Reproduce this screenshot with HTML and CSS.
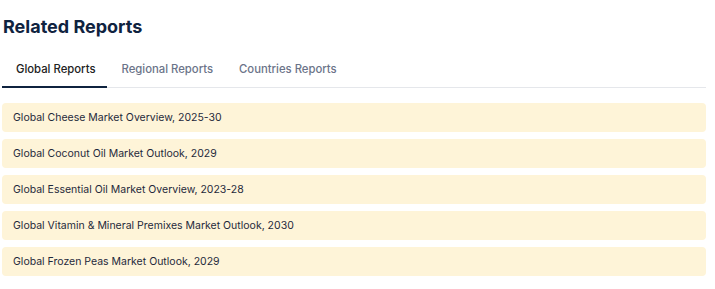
FILE: index.html
```html
<!DOCTYPE html>
<html>

<head lang="en">
  <meta charset="UTF-8">
  <title>Related Reports</title>
  <link rel="stylesheet" href="styles.css">
</head>

<body>
  <div class="related">
    <h2 class="related-title">Related Reports</h2>
    <ul class="tabs">
      <li class="tab active"><a href="#">Global Reports</a></li>
      <li class="tab"><a href="#">Regional Reports</a></li>
      <li class="tab"><a href="#">Countries Reports</a></li>
    </ul>
    <ul class="report-list">
      <li><a href="#">Global Cheese Market Overview, 2025-30</a></li>
      <li><a href="#">Global Coconut Oil Market Outlook, 2029</a></li>
      <li><a href="#">Global Essential Oil Market Overview, 2023-28</a></li>
      <li><a href="#">Global Vitamin &amp; Mineral Premixes Market Outlook, 2030</a></li>
      <li><a href="#">Global Frozen Peas Market Outlook, 2029</a></li>
    </ul>
  </div>
</body>

</html>
```

FILE: styles.css
```css
/* reset */
body,
h2,
ul,
li {
  margin: 0;
  padding: 0;
}

ul {
  list-style: none;
}

a {
  text-decoration: none;
  color: inherit;
}

body {
  font-family: Inter, "Liberation Sans", sans-serif;
  background: #fff;
  color: #1e293b;
}

.related {
  width: 704px;
  padding: 14px 9px 0 2px;
}

.related-title {
  font-size: 18px;
  font-weight: 700;
  line-height: 26px;
  color: #0f233f;
  padding-left: 1px;
}

.tabs {
  display: flex;
  margin-top: 12px;
  border-bottom: 1px solid #e5e7eb;
}

.tab a {
  display: block;
  padding: 1px 12px 0 14px;
  font-size: 11.3px;
  font-weight: 500;
  line-height: 33px;
  color: #6b7489;
  margin-bottom: -1px;
  border-bottom: 2px solid transparent;
}

.tab.active a {
  color: #222;
  border-bottom-color: #0f233f;
}

.report-list {
  display: flex;
  flex-direction: column;
  gap: 7px;
  margin-top: 15px;
}

.report-list li a {
  display: block;
  background: #fef4d8;
  border-radius: 4px;
  padding: 0 11px;
  font-size: 10.5px;
  line-height: 29px;
  color: #1e293b;
}
```
